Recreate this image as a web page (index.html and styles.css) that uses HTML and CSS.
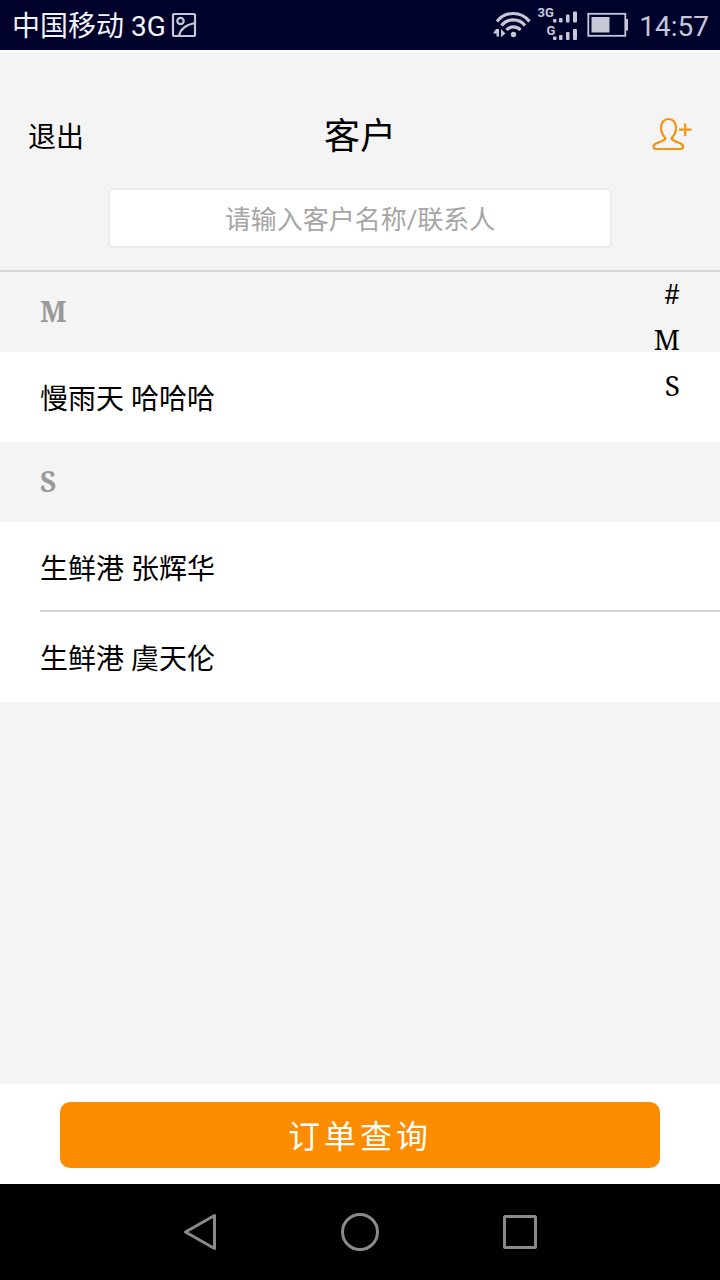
FILE: index.html
```html
<!DOCTYPE html>
<html lang="zh-CN">
<head>
    <meta charset="UTF-8">
    <meta name="viewport" content="width=device-width, initial-scale=1.0">
    <title>客户</title>
    <link rel="stylesheet" href="styles.css">
</head>
<body>
    <div class="status-bar">
        <span class="carrier">中国移动 3G</span>
        <svg class="icon-picture" width="26" height="26" viewBox="0 0 26 26" fill="none" stroke="#c6c8d8" stroke-width="2.2">
            <rect x="2" y="2" width="22" height="22" rx="1"/>
            <circle cx="9.5" cy="9" r="3.2"/>
            <path d="M8 24c1-6 6-11 16-13"/>
        </svg>
        <svg class="icon-signal" width="136" height="50" viewBox="0 0 136 50">
            <g fill="none" stroke="#c6c8d8" stroke-width="3.2">
                <path d="M6 21.500a20.500 20.500 0 0 1 32.500 0"/>
                <path d="M10.500 25.500a15 15 0 0 1 23.500 0"/>
                <path d="M15.500 30a9.500 9.500 0 0 1 14 0"/>
            </g>
            <g fill="#c6c8d8">
                <circle cx="22.500" cy="34.500" r="2.700"/>
                <path d="M5 29h3v7.500H5.500v-3H2zM10 29l4.500 4.500L10 37z"/>
                <text class="signal-text" x="46.500" y="17">3G</text>
                <text class="signal-text" x="55.500" y="35">G</text>
                <rect x="62" y="19" width="3.500" height="3.500" rx="1"/>
                <rect x="68" y="18" width="3.500" height="4.500" rx="1"/>
                <rect x="75" y="14.500" width="3.500" height="8" rx="1"/>
                <rect x="82" y="11.500" width="4" height="11" rx="1"/>
                <rect x="62" y="36.500" width="3.500" height="3.500" rx="1"/>
                <rect x="68" y="35" width="3.500" height="5" rx="1"/>
                <rect x="75" y="32" width="3.500" height="8" rx="1"/>
                <rect x="82" y="29" width="4" height="11" rx="1"/>
                <rect x="100.500" y="17" width="18" height="15.500"/>
                <rect x="135" y="19" width="2" height="11.500"/>
            </g>
            <rect x="97.300" y="13.800" width="37" height="22" fill="none" stroke="#c6c8d8" stroke-width="1.800"/>
        </svg>
        <span class="time">14:57</span>
    </div>

    <header class="header">
        <div class="nav">
            <a class="logout">退出</a>
            <h1 class="title">客户</h1>
            <a class="add-customer">
                <svg width="42" height="36" viewBox="0 0 42 36" fill="none" stroke="#f6920f" stroke-width="2.2">
                    <path d="M14.500 23.500C11.500 20 10 17 10 13c0-5.300 3-9 7.500-9s7.500 3.700 7.500 9c0 4-1.500 7-4.500 10.500 1 2 4 3 7.500 4.300 3 1.100 4.200 2 4.200 3.700s-1.200 2.500-3 2.500H5.500c-1.800 0-3-.8-3-2.500s1.200-2.600 4.200-3.700c3.500-1.300 6.800-2.300 7.800-4.300z"/>
                    <path d="M28 14.700h12.500M34.200 8.500v12.500"/>
                </svg>
            </a>
        </div>
        <input class="search" type="text" placeholder="请输入客户名称/联系人">
    </header>

    <main class="content">
        <h2 class="group-title">M</h2>
        <ul class="group">
            <li>慢雨天 哈哈哈</li>
        </ul>
        <h2 class="group-title">S</h2>
        <ul class="group">
            <li>生鲜港 张辉华</li>
            <li>生鲜港 虞天伦</li>
        </ul>

        <div class="letter-index">
            <span>#</span>
            <span>M</span>
            <span>S</span>
        </div>
    </main>

    <footer class="footer">
        <button class="query-btn">订单查询</button>
    </footer>

    <div class="system-nav">
        <svg width="40" height="40" viewBox="0 0 40 40"><path d="M5.500 20 34.500 3.500v33z"/></svg>
        <svg width="40" height="40" viewBox="0 0 40 40"><circle cx="20" cy="20" r="17.500"/></svg>
        <svg width="40" height="40" viewBox="0 0 40 40"><rect x="4.500" y="4.500" width="31" height="31" rx="1"/></svg>
    </div>
</body>
</html>
```

FILE: styles.css
```css
:root {
    --primary-color: #fc8c00;
    --background-color: #f4f4f4;
    --line-color: #d5d5d5;
    --status-color: #c6c8d8;
    --font-family: Roboto, 'Noto Sans CJK SC', sans-serif;
}

* {
    box-sizing: border-box;
}

body {
    margin: 0;
    height: 1280px;
    display: flex;
    flex-direction: column;
    font-family: var(--font-family);
    background-color: var(--background-color);
    color: #000;
    overflow: hidden;
}

.status-bar {
    height: 50px;
    padding: 0 12px;
    display: flex;
    align-items: center;
    background-color: #00022c;
    font-size: 28px;
    line-height: 50px;
}

.carrier {
    padding-top: 3px;
    color: #f2f3fa;
    font-weight: 400;
}

.icon-picture {
    margin-left: 5px;
}

.icon-signal {
    margin-left: auto;
    overflow: visible;
}

.signal-text {
    font-size: 13px;
    font-weight: 700;
}

.time {
    margin: 3px -1px 0 12px;
    color: var(--status-color);
    font-weight: 400;
}

.header {
    height: 222px;
    padding: 46px 28px 0;
    border-top: 3px solid #fff;
    border-bottom: 2px solid var(--line-color);
    display: flex;
    flex-direction: column;
    align-items: center;
}

.nav {
    width: 100%;
    height: 70px;
    display: grid;
    grid-template-columns: 1fr auto 1fr;
    align-items: center;
}

.logout {
    padding-top: 2px;
    font-size: 28px;
}

.title {
    margin: 0;
    padding-bottom: 2px;
    font-size: 36px;
    font-weight: 400;
}

.add-customer {
    justify-self: end;
    height: 36px;
    margin: 0 -1px 2px 0;
}

.search {
    width: 504px;
    height: 60px;
    margin-top: 19px;
    padding: 3px 20px 0;
    border: 2px solid #ebebeb;
    border-radius: 5px;
    background-color: #fff;
    font-family: var(--font-family);
    font-size: 26px;
    text-align: center;
    outline: none;
}

.search::placeholder {
    color: #a6a6a6;
}

.content {
    position: relative;
    flex: 1;
}

.group-title {
    height: 80px;
    margin: 0;
    padding-left: 40px;
    font-family: 'Noto Serif', 'Liberation Serif', serif;
    font-size: 28px;
    font-weight: 700;
    line-height: 78px;
    color: #999;
}

.group {
    margin: 0;
    padding: 0 0 0 40px;
    list-style: none;
    background-color: #fff;
}

.group li {
    height: 90px;
    font-size: 28px;
    line-height: 96px;
    border-bottom: 2px solid var(--line-color);
}

.group li:last-child {
    border-bottom: none;
}

/* floats over the list */
.letter-index {
    position: absolute;
    top: -2px;
    right: 40px;
    display: flex;
    flex-direction: column;
    text-align: right;
    font-family: 'Noto Serif', 'Liberation Serif', serif;
    font-size: 28px;
    line-height: 46px;
}

.footer {
    height: 100px;
    padding: 18px 60px 16px;
    background-color: #fff;
}

.query-btn {
    display: block;
    width: 100%;
    height: 66px;
    padding: 0 0 3px;
    border: none;
    border-radius: 10px;
    background-color: var(--primary-color);
    color: #fff;
    font-family: var(--font-family);
    font-size: 32px;
    letter-spacing: 4px;
}

.system-nav {
    height: 96px;
    display: flex;
    justify-content: center;
    align-items: center;
    gap: 120px;
    background-color: #000;
}

.system-nav svg {
    fill: none;
    stroke: #8a8a8a;
    stroke-width: 3;
    stroke-linejoin: round;
}
```
